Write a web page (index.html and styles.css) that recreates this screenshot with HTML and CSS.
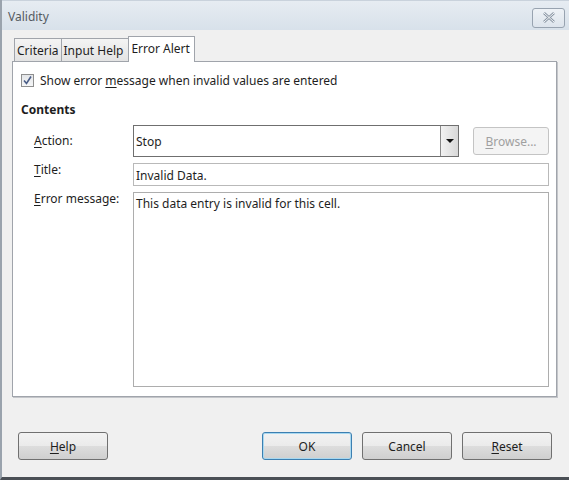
FILE: index.html
```html
<!DOCTYPE html>
<html lang="en">
<head>
  <meta charset="UTF-8">
  <title>Validity</title>
  <link rel="stylesheet" href="styles.css">
</head>
<body>

  <div class="window">
    <div class="titlebar">
      <span class="title">Validity</span>
      <div class="close">
        <svg width="14" height="11" viewBox="0 0 14 11">
          <path d="M2 1 L12 10 M12 1 L2 10" stroke="#8a96a4" stroke-width="2.6" fill="none"/>
          <path d="M2 1 L12 10 M12 1 L2 10" stroke="#f4f6f8" stroke-width="1" fill="none"/>
        </svg>
      </div>
    </div>

    <div class="content">
      <div class="tabs">
        <div class="tab">Criteria</div>
        <div class="tab tab-help">Input Help</div>
        <div class="tab active">Error Alert</div>
      </div>

      <div class="panel">
        <label class="check-row">
          <span class="checkbox">
            <svg width="11" height="11" viewBox="0 0 11 11">
              <path d="M2 5.5 L4.5 8.5 L9 1.5" stroke="#4a5d87" stroke-width="1.6" fill="none"/>
            </svg>
          </span>
          <span>Show error <u>m</u>essage when invalid values are entered</span>
        </label>

        <div class="section">Contents</div>

        <div class="form">
          <div class="lbl lbl-action"><u>A</u>ction:</div>
          <div class="action-row">
            <div class="select">
              <span>Stop</span>
              <span class="drop"><span class="arrow"></span></span>
            </div>
            <div class="btn disabled"><span><u>B</u>rowse...</span></div>
          </div>

          <div class="lbl"><u>T</u>itle:</div>
          <div class="input">Invalid Data.</div>

          <div class="lbl"><u>E</u>rror message:</div>
          <div class="textarea">This data entry is invalid for this cell.</div>
        </div>
      </div>

      <div class="buttons">
        <div class="btn"><span><u>H</u>elp</span></div>
        <div class="spacer"></div>
        <div class="btn default">OK</div>
        <div class="btn">Cancel</div>
        <div class="btn"><span><u>R</u>eset</span></div>
      </div>
    </div>
  </div>

</body>
</html>
```

FILE: styles.css
```css
body {
  margin: 0;
  font-family: "Noto Sans", "Open Sans", sans-serif;
  font-size: 12px;
  color: #1e1e1e;
  background: #ffffff;
}

u {
  text-decoration: underline;
  text-underline-offset: 2px;
}

.window {
  width: 569px;
  height: 480px;
  box-sizing: border-box;
  border-left: 2px solid #9aa3ad;
  border-bottom: 3px solid #4a4f55;
  background: #f0f0f0;
  display: flex;
  flex-direction: column;
}

.titlebar {
  height: 30px;
  background: linear-gradient(#e6ecf2, #d8e1ea);
  display: flex;
  align-items: center;
  justify-content: space-between;
  padding: 0 4px 0 6px;
  border-top: 1px solid #c9d2dc;
  box-sizing: border-box;
}

.title {
  color: #555b62;
  font-size: 12px;
  margin-top: 1px;
}

.close {
  width: 33px;
  height: 20px;
  box-sizing: border-box;
  border: 1px solid #98a3b0;
  border-radius: 3px;
  background: linear-gradient(#eef2f6, #dde4ec);
  display: flex;
  align-items: center;
  justify-content: center;
  margin-top: 4px;
}

.content {
  flex: 1;
  display: flex;
  flex-direction: column;
  padding: 6px 0 0 10px;
}

.tabs {
  display: flex;
  align-items: flex-end;
  padding-left: 2px;
  height: 25px;
  position: relative;
  z-index: 1;
}

.tab {
  height: 23px;
  box-sizing: border-box;
  padding: 2px 2px 0 2px;
  border: 1px solid #a0a4ab;
  border-bottom: none;
  background: linear-gradient(#f4f4f4, #e3e3e3);
  margin-right: -1px;
  line-height: 20px;
}

.tab-help {
  padding-right: 5px;
}

.tab.active {
  height: 26px;
  background: #ffffff;
  padding: 0 4px 0 2px;
  margin-bottom: -1px;
  line-height: 24px;
}

.panel {
  width: 545px;
  height: 336px;
  box-sizing: border-box;
  background: #ffffff;
  border: 1px solid #a0a4ab;
  box-shadow: 1px 1px 0 #c4c6ca;
  padding: 11px 7px 0 8px;
}

.check-row {
  display: flex;
  align-items: center;
  height: 15px;
  gap: 6px;
}

.checkbox {
  width: 13px;
  height: 13px;
  box-sizing: border-box;
  border: 1px solid #8f8f8f;
  background: linear-gradient(#e4e6e9, #f5f6f7);
  display: flex;
  align-items: center;
  justify-content: center;
}

.section {
  font-weight: bold;
  margin-top: 13px;
  height: 18px;
}

.form {
  display: grid;
  grid-template-columns: 99px 1fr;
  grid-template-rows: 32px 23px 195px;
  row-gap: 6px;
  margin-top: 6px;
  padding-left: 13px;
}

.lbl {
  margin-top: -2px;
}

.lbl-action {
  margin-top: 0;
  padding-top: 7px;
}

.action-row {
  display: flex;
  align-items: center;
  gap: 14px;
}

.select {
  flex: 1;
  height: 32px;
  box-sizing: border-box;
  border: 1px solid #6f6f6f;
  background: #ffffff;
  display: flex;
  align-items: center;
  justify-content: space-between;
  padding-left: 2px;
}

.drop {
  width: 18px;
  height: 30px;
  box-sizing: border-box;
  border-left: 1px solid #8a8a8a;
  background: linear-gradient(to right, #f2f2f2, #d8d8d8);
  display: flex;
  align-items: center;
  justify-content: center;
}

.arrow {
  width: 0;
  height: 0;
  border-left: 4px solid transparent;
  border-right: 4px solid transparent;
  border-top: 4px solid #111111;
}

.input {
  height: 23px;
  box-sizing: border-box;
  border: 1px solid #b9b9b9;
  padding: 3px 2px 0;
}

.textarea {
  height: 195px;
  box-sizing: border-box;
  border: 1px solid #adadad;
  padding: 2px 2px 0;
}

.btn {
  width: 90px;
  height: 28px;
  box-sizing: border-box;
  border: 1px solid #707070;
  border-radius: 3px;
  background: linear-gradient(#f2f2f2 0%, #ebebeb 50%, #dddddd 51%, #cfcfcf 100%);
  display: flex;
  align-items: center;
  justify-content: center;
}

.btn.disabled {
  width: 76px;
  color: #a0a0a0;
  border-color: #c4c4c4;
  background: #f4f4f4;
}

.btn.default {
  border-color: #3c7fb1;
  box-shadow: inset 0 0 0 1px #a8d8f0;
}

.buttons {
  display: flex;
  gap: 10px;
  margin-top: 35px;
  padding: 0 17px 0 6px;
}

.spacer {
  flex: 1;
}
```
